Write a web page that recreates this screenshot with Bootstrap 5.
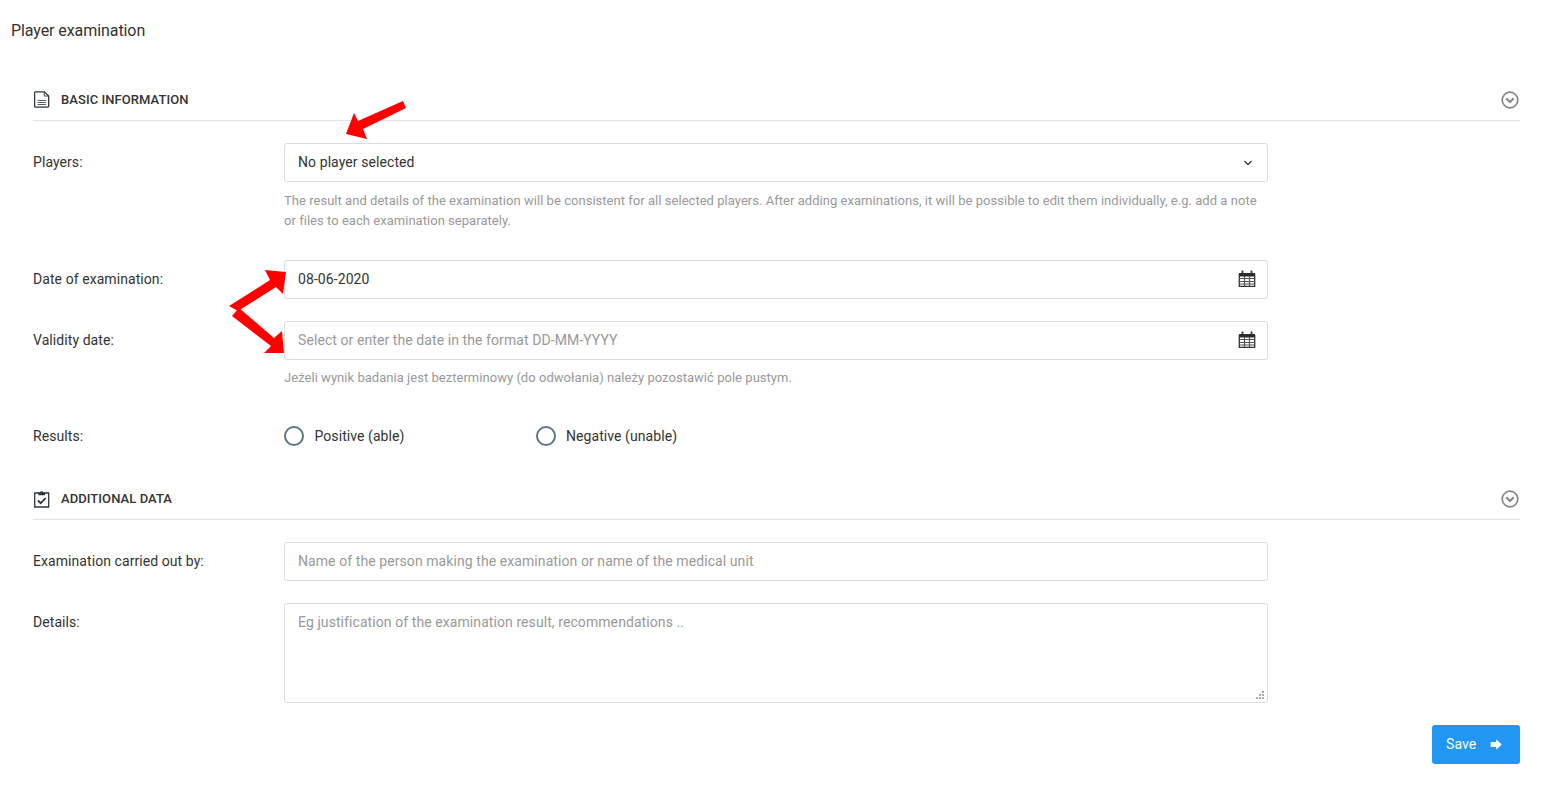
<!DOCTYPE html>
<html lang="en">
<head>
<meta charset="utf-8">
<title>Player examination</title>
<link href="https://cdn.jsdelivr.net/npm/bootstrap@5.3.0/dist/css/bootstrap.min.css" rel="stylesheet">
<style>
html,body{height:786px;overflow:hidden}
body{font-family:Roboto,"Liberation Sans",sans-serif;font-size:14px;letter-spacing:.07px;color:#333;background:#fff;position:relative}
.page-title{font-size:16px;letter-spacing:-.08px;line-height:20px;padding:21px 0 0 11px;margin:0;font-weight:400;color:#333}
.sheet{padding:0 32px 0 33px}
.sec-head{height:42px;border-bottom:1px solid #e3e3e3;color:#333}
.sec-head-a{margin-top:38px}
.sec-head-b{margin-top:32px}
.sec-title{font-size:13px;letter-spacing:.07px;font-weight:500;margin:0 0 0 12px;line-height:16px;text-transform:uppercase;color:#333}
.sec-ico{margin-left:1px;margin-right:-1px}
.sec-chev{margin-left:auto;margin-right:1px}
.lbl{flex:0 0 251px;line-height:16px;padding-top:11px;color:#333;margin:0}
.ctl{flex:0 0 984px;width:984px;position:relative}
.ctl .form-control,.ctl .form-select{height:39px;font-size:14px;letter-spacing:.08px;border-color:#dcdcdc;border-radius:3px;padding:0 13px;color:#333;box-shadow:none}
.ctl input.form-control{padding-bottom:1px}
.ctl .form-control::placeholder{color:#999}
.ctl .form-select{background-image:url("data:image/svg+xml,%3csvg xmlns='http://www.w3.org/2000/svg' viewBox='0 0 10 8'%3e%3cpath fill='none' stroke='%23333' stroke-width='1.250' d='M1.500 2 5 5.500 8.500 2'/%3e%3c/svg%3e");background-size:10px 8px;background-position:right 14px center}
.ctl textarea.form-control{height:100px;padding-top:9px;line-height:18px;resize:none;background-image:url("data:image/svg+xml,%3csvg xmlns='http://www.w3.org/2000/svg' width='10' height='9'%3e%3cpath fill='%23aaa' d='M7 0h2v2H7zM4 3h2v2H4zM7 3h2v2H7zM1 6h2v2H1zM4 6h2v2H4zM7 6h2v2H7z'/%3e%3c/svg%3e");background-repeat:no-repeat;background-position:right 2px bottom 2px;background-size:10px 9px}
.help{font-size:13px;letter-spacing:.035px;line-height:20px;color:#999;margin:0}
.cal{position:absolute;right:12px;top:10px}
.radio-pick{width:20px;height:20px;border:2px solid #5a7684;border-radius:50%;display:block;margin-right:10.5px}
.radio-item{flex:0 0 251.5px;line-height:20px}
.save-btn{background:#2196f3;border:0;color:#fff;font-size:14px;letter-spacing:.07px;width:88px;height:39px;border-radius:3px;padding:0 18px 0 14px}
.save-btn:hover{background:#2196f3;color:#fff}
.overlay{position:absolute;left:0;top:0;pointer-events:none}
</style>
</head>
<body>
<h1 class="page-title">Player examination</h1>
<div class="sheet">
  <div class="sec-head sec-head-a d-flex align-items-center">
    <svg class="sec-ico" width="16" height="17" viewBox="0 0 16 17" fill="none" stroke="#2f3640" stroke-width="1.300"><path d="M1.600 .8h8.800l4.300 4.200v10.200a1 1 0 0 1-1 1H1.600a1 1 0 0 1-1-1V1.800a1 1 0 0 1 1-1z"/><path d="M10.200 1v4h4.300" stroke-width=".9"/><path d="M3.500 9.500h8.500M3.500 11.500h8.500M3.500 13.500h8.500" stroke-width=".8"/></svg>
    <h2 class="sec-title">Basic information</h2>
    <svg class="sec-chev" width="18" height="18" viewBox="0 0 18 18" fill="none" stroke="#858585"><circle cx="9" cy="9" r="7.800" stroke-width="1.700"/><path d="M5.300 7.300 9 11l3.700-3.700" stroke-width="2"/></svg>
  </div>
  <div class="d-flex">
    <label class="lbl" style="margin-top:22px">Players:</label>
    <div class="ctl" style="margin-top:22px">
      <select class="form-select"><option>No player selected</option></select>
      <p class="help" style="margin-top:9px">The result and details of the examination will be consistent for all selected players. After adding examinations, it will be possible to edit them individually, e.g. add a note or files to each examination separately.</p>
    </div>
  </div>
  <div class="d-flex" style="margin-top:29px">
    <label class="lbl">Date of examination:</label>
    <div class="ctl">
      <input class="form-control" type="text" value="08-06-2020">
      <svg class="cal" width="18" height="17" viewBox="0 0 18 17"><use href="#calicon"/></svg>
    </div>
  </div>
  <div class="d-flex" style="margin-top:22px">
    <label class="lbl">Validity date:</label>
    <div class="ctl">
      <input class="form-control" type="text" placeholder="Select or enter the date in the format DD-MM-YYYY">
      <svg class="cal" width="18" height="17" viewBox="0 0 18 17"><use href="#calicon"/></svg>
      <p class="help" style="margin-top:8px">Jeżeli wynik badania jest bezterminowy (do odwołania) należy pozostawić pole pustym.</p>
    </div>
  </div>
  <div class="d-flex align-items-center" style="margin-top:38px">
    <span class="lbl" style="padding-top:0">Results:</span>
    <div class="d-flex">
      <div class="radio-item d-flex align-items-center"><span class="radio-pick"></span>Positive (able)</div>
      <div class="radio-item d-flex align-items-center"><span class="radio-pick"></span>Negative (unable)</div>
    </div>
  </div>
  <div class="sec-head sec-head-b d-flex align-items-center">
    <svg class="sec-ico" width="16" height="18" viewBox="0 0 16 18" fill="none" stroke="#2f3640" stroke-width="1.300"><path d="M5 3H.7v14h14V3h-4.200"/><path d="M5 4.500V2.800h1.600a1.300 1.300 0 0 1 2.400 0h1.500v1.700z" fill="#2f3640"/><path d="M4 10.500l2.700 2.700 5-5.200" stroke-width="1.800"/></svg>
    <h2 class="sec-title">Additional data</h2>
    <svg class="sec-chev" width="18" height="18" viewBox="0 0 18 18" fill="none" stroke="#858585"><circle cx="9" cy="9" r="7.800" stroke-width="1.700"/><path d="M5.300 7.300 9 11l3.700-3.700" stroke-width="2"/></svg>
  </div>
  <div class="d-flex" style="margin-top:22px">
    <label class="lbl">Examination carried out by:</label>
    <div class="ctl"><input class="form-control" type="text" placeholder="Name of the person making the examination or name of the medical unit"></div>
  </div>
  <div class="d-flex" style="margin-top:22px">
    <label class="lbl">Details:</label>
    <div class="ctl"><textarea class="form-control" placeholder="Eg justification of the examination result, recommendations .."></textarea></div>
  </div>
  <div class="d-flex justify-content-end" style="margin-top:22px">
    <button type="button" class="btn save-btn d-flex align-items-center justify-content-between">Save
      <svg width="12" height="11" viewBox="0 0 12 11" fill="#fff"><path d="M.7 3h5.500V.2l5.500 5.300-5.500 5.300V8H.7z"/></svg>
    </button>
  </div>
</div>
<svg class="overlay" width="1552" height="786" viewBox="0 0 1552 786" fill="#fe0000">
  <path d="M403 101l3 7-43 21 4 10-21-5 8-21 4 8z"/>
  <path d="M229 306l41-26-5-10 21 2-3 22-7-7-38 24z"/>
  <path d="M232 316l7-8 35 30 8-7 2 22-20 0 7-7z"/>
</svg>
<svg width="0" height="0" class="position-absolute">
  <symbol id="calicon" viewBox="0 0 18 17">
    <path d="M1 3h16v3.500H1z" fill="#2b2b2b"/>
    <path d="M4.500 .5v3M13.500 .5v3" stroke="#3a3a3a" stroke-width="1.800"/>
    <path d="M1.300 4v12.300h15.400V4" fill="none" stroke="#333" stroke-width="1.300"/>
    <path d="M1.500 8.500h15M1.500 11.500h15M1.500 14h15M6.500 6v10M11.500 6v10" stroke="#555" stroke-width="1.200" fill="none"/>
  </symbol>
</svg>
</body>
</html>
